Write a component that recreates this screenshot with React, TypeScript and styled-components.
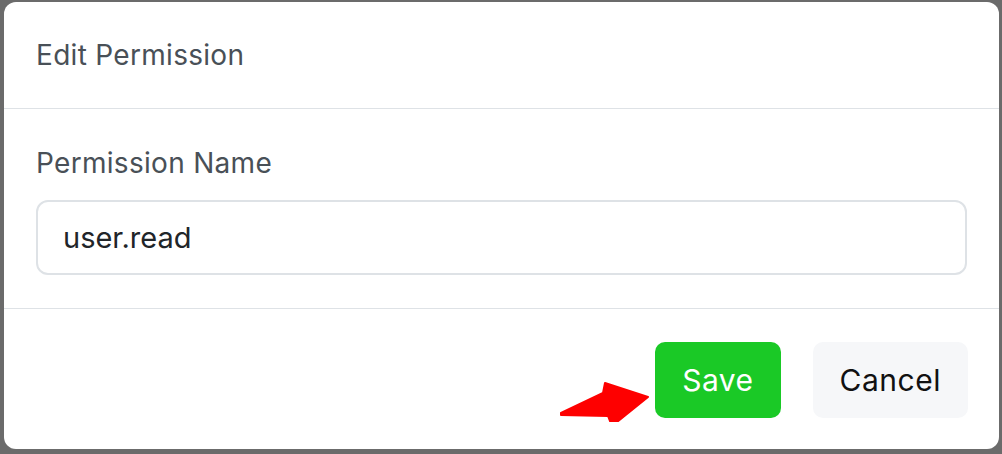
import React from "react"
import styled, { createGlobalStyle } from "styled-components"

const GlobalStyle = createGlobalStyle`
  html, body {
    margin: 0;
    padding: 0;
    background: #6b6b6b;
  }
  body {
    font-family: Inter, Roboto, "Liberation Sans", sans-serif;
  }
`

const Backdrop = styled.div`
  width: 1002px;
  height: 454px;
  box-sizing: border-box;
  padding: 2px 3px 5px 4px;
  background: #6b6b6b;
`

const Dialog = styled.div`
  height: 100%;
  background: #ffffff;
  border-radius: 12px;
  display: flex;
  flex-direction: column;
  overflow: hidden;
`

const Header = styled.div`
  padding: 32px 32px 32px;
  border-bottom: 1px solid #dee2e6;
`

const Title = styled.h5`
  margin: 0;
  font-size: 28px;
  line-height: 42px;
  font-weight: 400;
  color: #495057;
  letter-spacing: 0.3px;
`

const Body = styled.div`
  padding: 36px 32px 33px;
  border-bottom: 1px solid #dee2e6;
`

const Label = styled.label`
  display: block;
  font-size: 28px;
  line-height: 36px;
  color: #495057;
  letter-spacing: 0.3px;
  margin-bottom: 19px;
`

const Input = styled.input`
  display: block;
  width: 100%;
  box-sizing: border-box;
  height: 75px;
  padding: 0 25px;
  border: 2px solid #dee2e6;
  border-radius: 12px;
  font-family: Inter, Roboto, "Liberation Sans", sans-serif;
  font-size: 29px;
  color: #212529;
  background: #fff;
  outline: none;
`

const Footer = styled.div`
  position: relative;
  flex: 1;
  display: flex;
  justify-content: flex-end;
  align-items: flex-start;
  gap: 32px;
  padding: 33px 31px 0 32px;
`

const Button = styled.button<{ $variant: "save" | "cancel" }>`
  height: 76px;
  padding: 0 27px;
  border: none;
  border-radius: 10px;
  font-family: Inter, Roboto, "Liberation Sans", sans-serif;
  font-size: 30px;
  letter-spacing: 0.5px;
  background: ${(p) => (p.$variant === "save" ? "#1ac926" : "#f6f7f9")};
  color: ${(p) => (p.$variant === "save" ? "#ffffff" : "#111111")};
  cursor: pointer;
`

// red annotation arrow pointing at the Save button
const Arrow = styled.svg`
  position: absolute;
  left: 552px;
  top: 63px;
  width: 100px;
  height: 50px;
`

export default function App() {
  return (
    <>
      <GlobalStyle />
      <Backdrop>
        <Dialog>
          <Header>
            <Title>Edit Permission</Title>
          </Header>
          <Body>
            <Label>Permission Name</Label>
            <Input defaultValue="user.read" />
          </Body>
          <Footer>
            <Arrow viewBox="556 372 100 50">
              <polygon
                points="561,413 603,393 605,383 648,397 612,426 608,416 561,415"
                fill="#fe0000"
                stroke="#fe0000"
                strokeWidth="2"
                strokeLinejoin="round"
              />
            </Arrow>
            <Button $variant="save">Save</Button>
            <Button $variant="cancel">Cancel</Button>
          </Footer>
        </Dialog>
      </Backdrop>
    </>
  )
}
